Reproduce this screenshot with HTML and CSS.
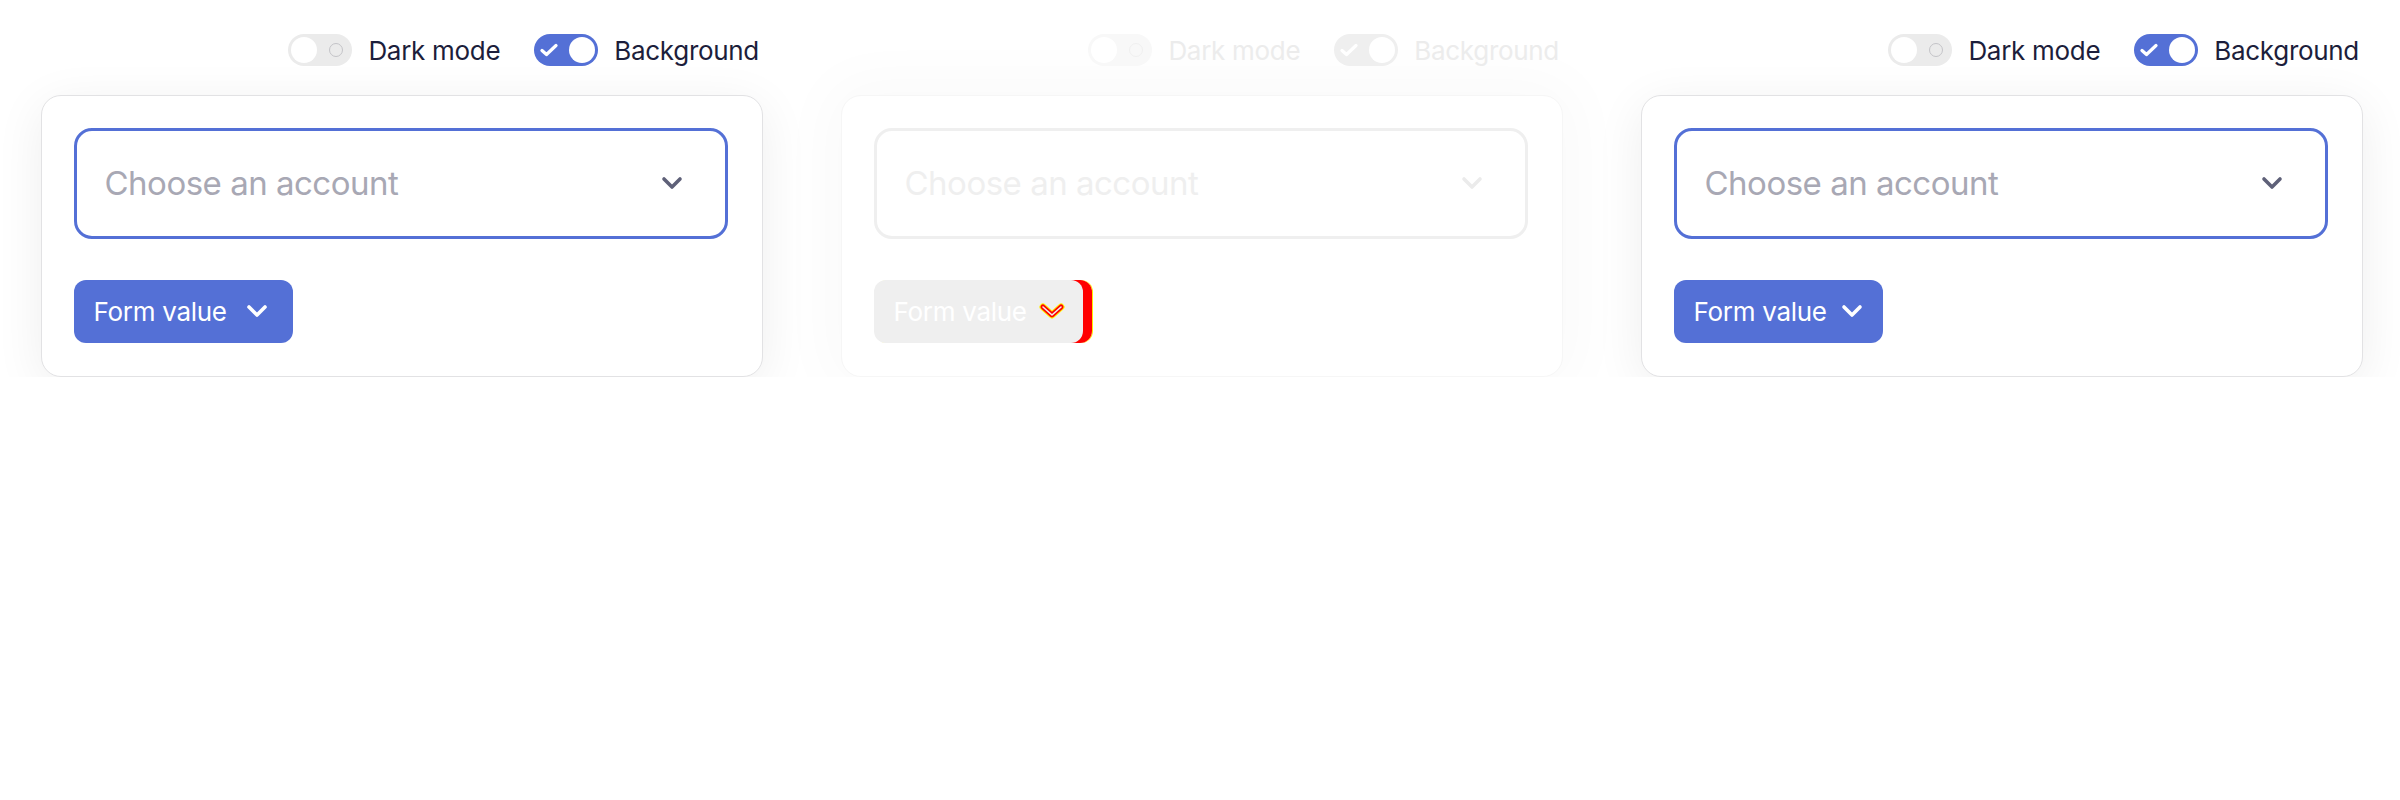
FILE: index.html
```html
<!DOCTYPE html>
<html lang="en">
<head>
<meta charset="utf-8">
<title>Select comparison</title>
<link rel="stylesheet" href="styles.css">
</head>
<body>
<div class="stage">

  <section class="panel">
    <div class="toggles">
      <div class="switch">
        <span class="track track--off"><span class="knob"></span><span class="ring"></span></span>
        <span class="label">Dark mode</span>
      </div>
      <div class="switch">
        <span class="track track--on">
          <svg class="check" viewBox="0 0 18 14" width="18" height="14"><polyline points="2,7.5 6.5,11.5 16,2.5" /></svg>
          <span class="knob"></span>
        </span>
        <span class="label">Background</span>
      </div>
    </div>
    <div class="card">
      <div class="select">
        <span class="placeholder">Choose an account</span>
        <svg class="select-chev" viewBox="0 0 22 14" width="22" height="14"><polyline points="3,3 11,11 19,3" /></svg>
      </div>
      <div class="btn-row">
        <button class="btn">
          <span>Form value</span>
          <svg class="btn-chev" viewBox="0 0 22 14" width="22" height="14"><polyline points="3,3 11,11 19,3" /></svg>
        </button>
      </div>
    </div>
  </section>

  <section class="panel panel--diff">
    <div class="toggles">
      <div class="switch">
        <span class="track track--off"><span class="knob"></span><span class="ring"></span></span>
        <span class="label">Dark mode</span>
      </div>
      <div class="switch">
        <span class="track track--on">
          <svg class="check" viewBox="0 0 18 14" width="18" height="14"><polyline points="2,7.5 6.5,11.5 16,2.5" /></svg>
          <span class="knob"></span>
        </span>
        <span class="label">Background</span>
      </div>
    </div>
    <div class="card">
      <div class="select">
        <span class="placeholder">Choose an account</span>
        <svg class="select-chev" viewBox="0 0 22 14" width="22" height="14"><polyline points="3,3 11,11 19,3" /></svg>
      </div>
      <div class="btn-row">
        <div class="diff-wrap">
          <button class="btn btn--narrow">
            <span>Form value</span>
            <svg class="btn-chev diff-chev" viewBox="0 0 26 16" width="26" height="16">
              <polyline class="d1" points="4,4 13,12 22,4" />
              <polyline class="d2" points="4,4 13,12 22,4" />
              <polyline class="d3" points="4,4 13,12 22,4" />
            </svg>
          </button>
        </div>
      </div>
    </div>
  </section>

  <section class="panel">
    <div class="toggles">
      <div class="switch">
        <span class="track track--off"><span class="knob"></span><span class="ring"></span></span>
        <span class="label">Dark mode</span>
      </div>
      <div class="switch">
        <span class="track track--on">
          <svg class="check" viewBox="0 0 18 14" width="18" height="14"><polyline points="2,7.5 6.5,11.5 16,2.5" /></svg>
          <span class="knob"></span>
        </span>
        <span class="label">Background</span>
      </div>
    </div>
    <div class="card">
      <div class="select">
        <span class="placeholder">Choose an account</span>
        <svg class="select-chev" viewBox="0 0 22 14" width="22" height="14"><polyline points="3,3 11,11 19,3" /></svg>
      </div>
      <div class="btn-row">
        <button class="btn btn--narrow">
          <span>Form value</span>
          <svg class="btn-chev" viewBox="0 0 22 14" width="22" height="14"><polyline points="3,3 11,11 19,3" /></svg>
        </button>
      </div>
    </div>
  </section>

</div>
</body>
</html>
```

FILE: styles.css
```css
* { box-sizing: border-box; }

html, body {
  margin: 0;
  padding: 0;
  background: #ffffff;
  font-family: Inter, "Noto Sans", "Liberation Sans", sans-serif;
  color: #1c1e3b;
}

.stage {
  display: grid;
  grid-template-columns: 800px 800px 800px;
  width: 2400px;
}

.panel {
  padding: 34px 0 0 41px;
}

.toggles {
  display: flex;
  justify-content: flex-end;
  align-items: center;
  gap: 34px;
  width: 718px;
  height: 32px;
}

.switch {
  display: flex;
  align-items: center;
  gap: 16px;
}

.label {
  font-size: 26px;
  line-height: 32px;
  letter-spacing: -0.3px;
  color: #1c1e3b;
  padding-top: 2px;
}

.track {
  width: 64px;
  height: 32px;
  border-radius: 16px;
  display: flex;
  align-items: center;
  justify-content: space-between;
  flex-shrink: 0;
}

.track--off {
  background: #ebebeb;
  padding: 0 9px 0 3px;
}

.track--on {
  background: #5470d6;
  padding: 0 3px 0 6px;
}

.knob {
  width: 26px;
  height: 26px;
  border-radius: 50%;
  background: #ffffff;
}

.ring {
  width: 14px;
  height: 14px;
  border-radius: 50%;
  border: 1.5px solid #c4c4c8;
}

.check {
  display: block;
}
.check polyline {
  fill: none;
  stroke: #ffffff;
  stroke-width: 3.2;
  stroke-linecap: round;
  stroke-linejoin: round;
}

.card {
  margin-top: 29px;
  width: 722px;
  height: 282px;
  background: #ffffff;
  border: 1.5px solid #e2e2e4;
  border-radius: 20px;
  box-shadow: 0 10px 50px rgba(0, 0, 0, 0.07);
  padding: 31.5px 32.5px 0 31.5px;
}

.select {
  width: 654px;
  height: 111px;
  border: 3px solid #5470d6;
  border-radius: 18px;
  display: flex;
  align-items: center;
  justify-content: space-between;
  padding: 0 42px 0 28px;
}

.placeholder {
  font-size: 33px;
  letter-spacing: -0.5px;
  color: #a8a8b4;
}

.select-chev {
  display: block;
}
.select-chev polyline {
  fill: none;
  stroke: #5e6078;
  stroke-width: 3.6;
  stroke-linecap: round;
  stroke-linejoin: round;
}

.btn-row {
  margin-top: 41px;
  display: flex;
}

.btn {
  height: 63px;
  border: none;
  border-radius: 12px;
  background: #5470d6;
  color: #ffffff;
  font-family: inherit;
  font-size: 26px;
  letter-spacing: -0.3px;
  display: flex;
  align-items: center;
  gap: 19px;
  padding: 0 25px 0 20px;
  margin: 0;
}

.btn--narrow {
  gap: 14px;
  padding: 0 20px 0 20px;
}

.btn-chev {
  display: block;
}
.btn-chev polyline {
  fill: none;
  stroke: #ffffff;
  stroke-width: 3.6;
  stroke-linecap: round;
  stroke-linejoin: round;
}

/* diff panel */
.panel--diff .label { color: #ececec; }
.panel--diff .track--off { background: #f8f8f8; }
.panel--diff .ring { border-color: #f0f0f0; }
.panel--diff .track--on { background: #efefef; }
.panel--diff .card {
  border-color: #f6f6f6;
  box-shadow: 0 0 60px 16px rgba(0, 0, 0, 0.022);
}
.panel--diff .select { border-color: #efefef; }
.panel--diff .placeholder { color: #efefef; }
.panel--diff .select-chev polyline { stroke: #ebebeb; }
.panel--diff .btn { background: #efefef; }

.diff-wrap {
  display: flex;
  width: 218px;
  border-radius: 12px;
  background: linear-gradient(to right, transparent 180px, #ff0000 180px);
  box-shadow: 1px 0 0 #ffee00;
}

.diff-chev {
  margin-left: -2px;
  margin-right: -2px;
}
.diff-chev .d1 { stroke: #ffee00; stroke-width: 7; }
.diff-chev .d2 { stroke: #ff0000; stroke-width: 5; }
.diff-chev .d3 { stroke: #efefef; stroke-width: 1.6; }
```
